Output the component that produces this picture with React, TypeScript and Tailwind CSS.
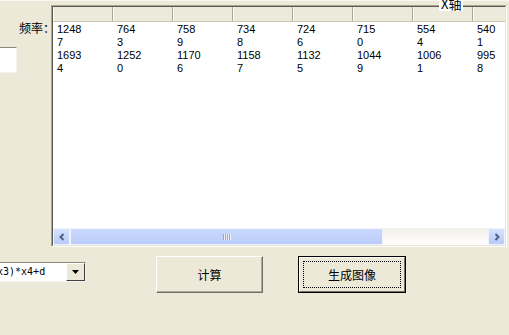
import React from "react";

const cols = [
  ["1248", "7", "1693", "4"],
  ["764", "3", "1252", "0"],
  ["758", "9", "1170", "6"],
  ["734", "8", "1158", "7"],
  ["724", "6", "1132", "5"],
  ["715", "0", "1044", "9"],
  ["554", "4", "1006", "1"],
  ["540", "1", "995", "8"],
];

const cjk = { fontFamily: '"Noto Sans CJK SC", "Liberation Sans", sans-serif' };

function ArrowBtn({ dir }: { dir: "left" | "right" }) {
  return (
    <div className="w-[17px] h-[17px] shrink-0 rounded-[2px] border border-[#eef3fe] bg-gradient-to-b from-[#d6e2fd] to-[#b7cbf8] flex items-center justify-center">
      <svg width="8" height="8" viewBox="0 0 8 8">
        {dir === "left" ? (
          <path d="M5.5 1 L2.5 4 L5.5 7" stroke="#4d6185" strokeWidth="2" fill="none" />
        ) : (
          <path d="M2.5 1 L5.5 4 L2.5 7" stroke="#4d6185" strokeWidth="2" fill="none" />
        )}
      </svg>
    </div>
  );
}

export default function App() {
  return (
    <div
      className="w-[509px] h-[335px] bg-[#ece9d8] overflow-hidden flex flex-col relative text-black"
      style={{ fontFamily: '"Liberation Sans", "Noto Sans CJK SC", sans-serif' }}
    >
      <div className="h-[1px] bg-[#f8f7f1] shrink-0" />
      <div className="flex h-[247px] shrink-0">
        {/* left column */}
        <div className="w-[51px] shrink-0 flex flex-col">
          <div className="mt-[20px] -mr-[4px] text-right text-[12px] leading-[14px] whitespace-nowrap" style={cjk}>
            频率：
          </div>
          <div className="mt-[12px] w-[17px] h-[26px] bg-white border-t border-[#8a8878] border-r border-r-[#f4f3ee] border-b border-b-[#f4f3ee]" />
        </div>
        {/* grid */}
        <div className="mt-[4px] w-[456px] h-[242px] shrink-0 border-l border-t border-[#a7a595] border-r border-r-[#ffffff] border-b border-b-[#ffffff]">
          <div className="w-full h-full border-l border-t border-[#5d5b50] border-r border-r-[#e4e2d5] border-b border-b-[#e4e2d5] bg-white flex flex-col">
            <div className="flex h-[15px] shrink-0 bg-[#ebeadb] border-b border-[#c9c5b5] overflow-hidden">
              {cols.map((_, i) => (
                <div key={i} className="w-[60px] shrink-0 h-full border-l border-white border-r border-r-[#aca899]" />
              ))}
            </div>
            <div className="flex flex-1 overflow-hidden pt-[1px]">
              {cols.map((c, i) => (
                <div key={i} className="w-[60px] shrink-0 pl-[4px] flex flex-col">
                  {c.map((v, j) => (
                    <div key={j} className="h-[13px] text-[11px] leading-[13px]">
                      {v}
                    </div>
                  ))}
                </div>
              ))}
            </div>
            {/* scrollbar */}
            <div className="h-[17px] shrink-0 flex bg-gradient-to-b from-[#f3f1ea] to-[#fefefe]">
              <ArrowBtn dir="left" />
              <div className="w-[313px] h-[17px] shrink-0 rounded-[2px] border border-[#eef3fe] bg-gradient-to-b from-[#cad8fd] to-[#b9ccf8] flex items-center justify-center">
                <div className="flex gap-[1px]">
                  {[0, 1, 2, 3].map((k) => (
                    <div key={k} className="w-[1px] h-[6px] bg-[#8ea5e0] shadow-[1px_0_0_#eef3fe]" />
                  ))}
                </div>
              </div>
              <div className="flex-1" />
              <ArrowBtn dir="right" />
            </div>
          </div>
        </div>
      </div>

      {/* bottom controls */}
      <div className="flex items-start">
        <div className="mt-[14px] w-[86px] h-[20px] shrink-0 flex border-t border-[#8a8878] border-b border-b-[#f4f3ee] border-r border-r-[#f4f3ee] bg-white overflow-hidden">
          <div
            className="flex-1 -ml-[3px] pt-[3px] text-[10px] leading-[12px] whitespace-nowrap"
            style={{ fontFamily: '"DejaVu Sans Mono", monospace' }}
          >
            x3)*x4+d
          </div>
          <div className="w-[19px] h-[18px] shrink-0 bg-[#ece9d8] border-t border-l border-white border-r border-r-[#404040] border-b border-b-[#404040] flex items-center justify-center">
            <svg width="7" height="4" viewBox="0 0 7 4">
              <path d="M0 0 H7 L3.5 4 Z" fill="#000" />
            </svg>
          </div>
        </div>
        <button
          className="ml-[70px] mt-[8px] w-[107px] h-[37px] shrink-0 bg-[#ece9d8] border-t border-l border-white border-r border-r-[#716f64] border-b border-b-[#716f64] shadow-[inset_-1px_-1px_0_#aca899] text-[12px] flex items-center justify-center"
          style={cjk}
        >
          计算
        </button>
        <button
          className="ml-[35px] mt-[8px] w-[108px] h-[37px] shrink-0 bg-black p-[1px]"
          style={cjk}
        >
          <div className="w-full h-full bg-[#ece9d8] border-t border-l border-white border-r border-r-[#716f64] border-b border-b-[#716f64] p-[3px]">
            <div className="w-full h-full border border-dotted border-black flex items-center justify-center text-[12px]">
              生成图像
            </div>
          </div>
        </button>
      </div>

      {/* overlaid caption */}
      <div className="absolute left-[439px] -top-[4px] bg-white px-[2px] text-[13px] leading-[15px]" style={cjk}>
        X轴
      </div>
    </div>
  );
}
